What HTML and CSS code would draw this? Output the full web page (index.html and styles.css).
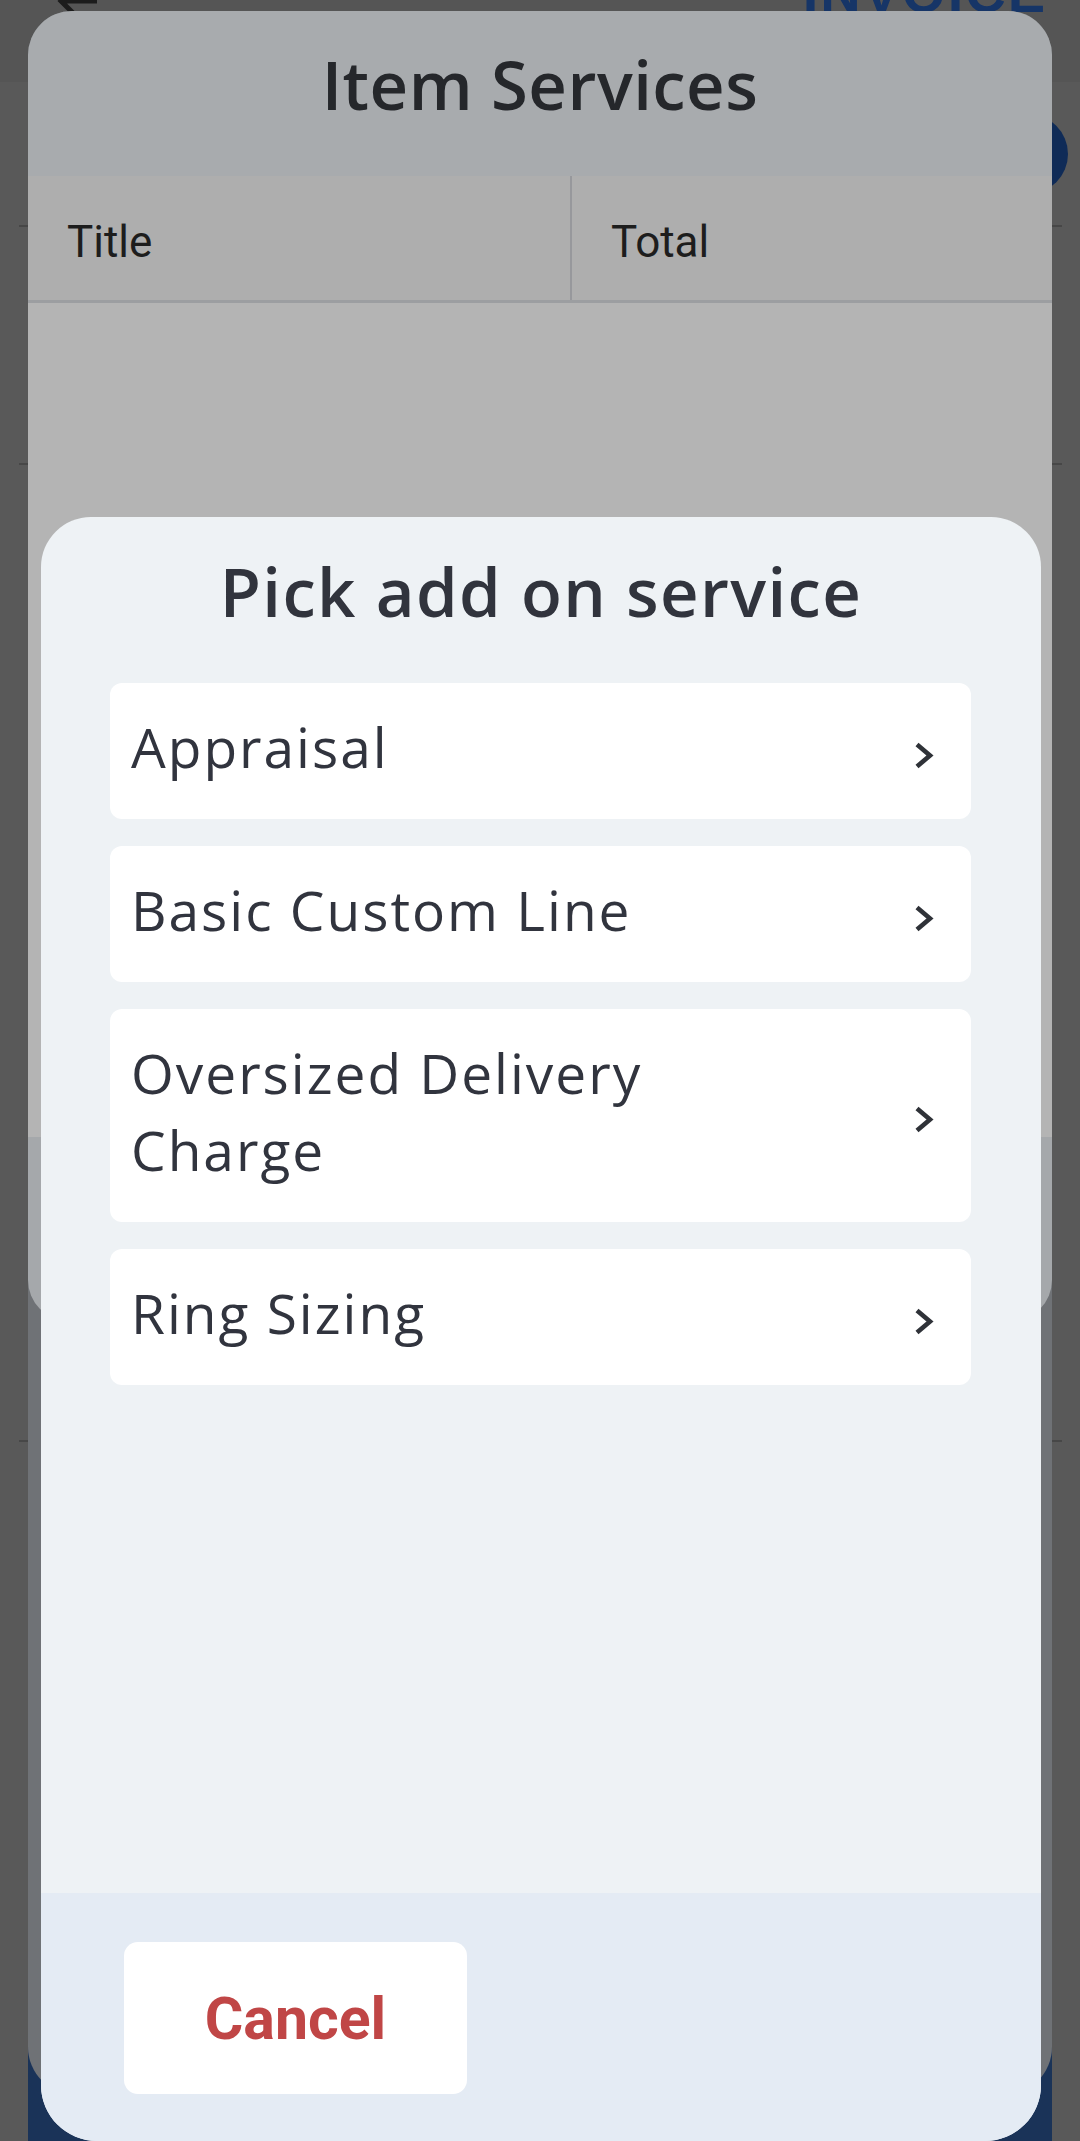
FILE: index.html
```html
<html>
<head>
    <title>Item Services</title>
    <meta name="viewport" content="width=device-width, initial-scale=1" />
    <link rel="stylesheet" href="styles.css">
</head>
<body>
<div class="page">
    <div class="topbar">
        <svg class="back" width="44" height="44" viewBox="0 0 44 44">
            <path d="M42 22H8M20 8L6 22l14 14" fill="none" stroke="#1c1c1c" stroke-width="5"/>
        </svg>
        <span class="logo">INVOICE</span>
    </div>
    <div class="summary"><span class="fab"></span></div>
    <div class="block block-short"></div>
    <div class="block block-long"></div>
</div>

<div class="navbar"></div>

<div class="sheet">
    <div class="sheet-head">Item Services</div>
    <div class="sheet-cols">
        <div class="col col-first">Title</div>
        <div class="col">Total</div>
    </div>
    <div class="sheet-body"></div>
    <div class="sheet-foot"></div>
</div>

<div class="picker">
    <div class="picker-title">Pick add on service</div>
    <div class="options">
        <div class="option">
            <span class="option-label">Appraisal</span>
            <svg class="chev" width="24" height="27" viewBox="0 0 24 27"><polyline points="4,2.5 17,13.5 4,24.5" fill="none" stroke="#2f3238" stroke-width="4.6"/></svg>
        </div>
        <div class="option">
            <span class="option-label">Basic Custom Line</span>
            <svg class="chev" width="24" height="27" viewBox="0 0 24 27"><polyline points="4,2.5 17,13.5 4,24.5" fill="none" stroke="#2f3238" stroke-width="4.6"/></svg>
        </div>
        <div class="option">
            <span class="option-label">Oversized Delivery Charge</span>
            <svg class="chev" width="24" height="27" viewBox="0 0 24 27"><polyline points="4,2.5 17,13.5 4,24.5" fill="none" stroke="#2f3238" stroke-width="4.6"/></svg>
        </div>
        <div class="option">
            <span class="option-label">Ring Sizing</span>
            <svg class="chev" width="24" height="27" viewBox="0 0 24 27"><polyline points="4,2.5 17,13.5 4,24.5" fill="none" stroke="#2f3238" stroke-width="4.6"/></svg>
        </div>
    </div>
    <div class="picker-foot">
        <button class="cancel">Cancel</button>
    </div>
</div>
</body>
</html>
```

FILE: styles.css
```css
body {
    margin: 0;
    width: 1080px;
    height: 2141px;
    overflow: hidden;
    position: relative;
    background: #595959;
    font-family: "Open Sans", sans-serif;
}

/* dimmed page under the two sheets */
.topbar {
    height: 82px;
    background: #555555;
    display: flex;
    justify-content: space-between;
    align-items: flex-start;
    padding: 0 33px 0 55px;
    overflow: hidden;
}

.topbar .back {
    margin-top: -21px;
}

.logo {
    margin-top: -40px;
    font: bold 56px "Liberation Sans", sans-serif;
    color: #163567;
    letter-spacing: 2px;
}

.summary {
    height: 143px;
    margin: 0 18px 0 19px;
    border-bottom: 2px solid #474747;
    display: flex;
    justify-content: flex-end;
    align-items: center;
}

.fab {
    width: 80px;
    height: 80px;
    margin-right: -6px;
    border-radius: 50%;
    background: #0f2b57;
}

.block {
    margin: 0 18px 0 19px;
    border-bottom: 2px solid #474747;
}

.block-short {
    height: 236px;
}

.block-long {
    height: 975px;
}

.navbar {
    position: absolute;
    left: 28px;
    top: 2030px;
    width: 1024px;
    height: 111px;
    background: #1a3358;
}

/* Item Services sheet, dimmed */
.sheet {
    position: absolute;
    left: 28px;
    top: 11px;
    width: 1024px;
    height: 2084px;
    background: #6f7276;
    border-radius: 44px 44px 48px 48px;
    overflow: hidden;
    display: flex;
    flex-direction: column;
}

.sheet-head {
    height: 165px;
    box-sizing: border-box;
    padding-top: 28px;
    background: #a8abae;
    text-align: center;
    font-size: 67px;
    font-weight: 600;
    line-height: 90px;
    color: #25272b;
    letter-spacing: 0.5px;
}

.sheet-cols {
    height: 127px;
    box-sizing: border-box;
    display: grid;
    grid-template-columns: 544px 1fr;
    background: #aeaeae;
    border-bottom: 3px solid #9c9ea1;
}

.col {
    display: flex;
    align-items: center;
    padding: 8px 0 0 39px;
    font: 44px Roboto, sans-serif;
    color: #1d1d1d;
}

.col-first {
    border-right: 2px solid #97989c;
}

.sheet-body {
    height: 834px;
    background: #b4b4b4;
}

.sheet-foot {
    height: 184px;
    background: #a5a8ab;
    border-radius: 0 0 41px 41px;
}

/* add on service picker */
.picker {
    position: absolute;
    left: 41px;
    top: 517px;
    width: 1000px;
    height: 1624px;
    background: #eef2f5;
    border-radius: 50px 50px 56px 56px;
    overflow: hidden;
    display: flex;
    flex-direction: column;
}

.picker-title {
    padding-top: 29px;
    text-align: center;
    font-size: 67px;
    font-weight: 600;
    line-height: 90px;
    color: #31343d;
    letter-spacing: 1.4px;
}

.options {
    flex: 1;
    padding: 47px 70px 0 69px;
    display: flex;
    flex-direction: column;
    gap: 27px;
}

.option {
    background: #ffffff;
    border-radius: 12px;
    display: flex;
    align-items: center;
    padding: 25px 34px 34px 21px;
}

.option-label {
    flex: 1;
    max-width: 600px;
    margin-right: auto;
    font-size: 55px;
    line-height: 77px;
    letter-spacing: 2px;
    color: #31343e;
}

.chev {
    margin-top: 17px;
    overflow: visible;
}

.picker-foot {
    height: 248px;
    box-sizing: border-box;
    padding: 49px 0 0 83px;
    background: #e4ebf4;
}

.cancel {
    width: 343px;
    height: 152px;
    border: 0;
    border-radius: 14px;
    background: #ffffff;
    font: bold 59px Roboto, sans-serif;
    color: #c04646;
    padding: 0;
}
```
